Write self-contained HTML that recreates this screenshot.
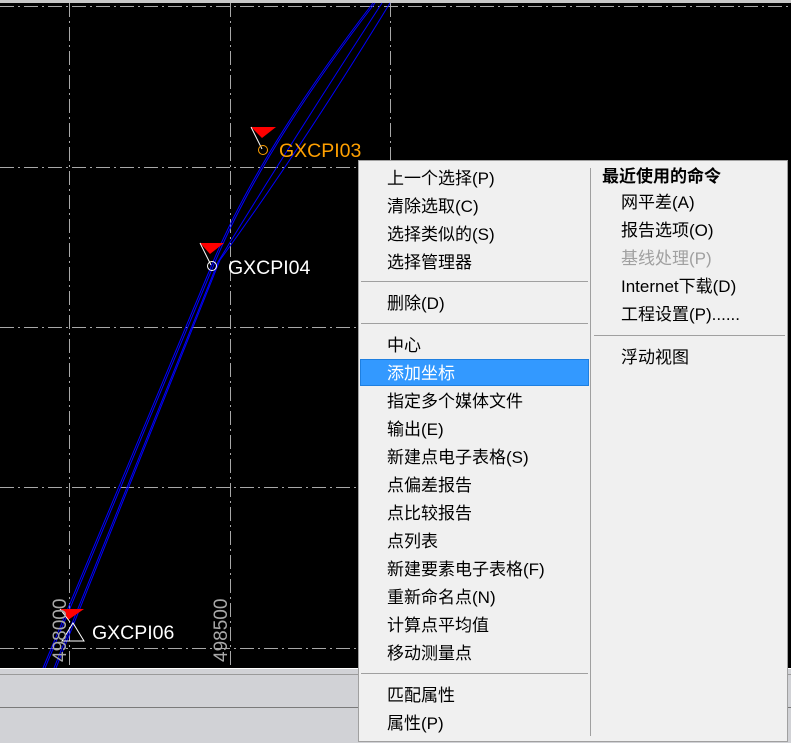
<!DOCTYPE html>
<html><head><meta charset="utf-8"><style>
*{margin:0;padding:0}
body{width:791px;height:743px;overflow:hidden;background:#000;position:relative;font-family:"Liberation Sans","Noto Sans CJK SC",sans-serif}
.abs{position:absolute}
.menu{position:absolute;left:358px;top:160px;width:430px;height:582px;background:#f0f0f0;border:1px solid #a0a0a0;box-sizing:border-box}
.it{position:absolute;font-size:17px;color:#000;line-height:20px;white-space:nowrap;margin-top:2px}
.sep{position:absolute;height:1px;background:#a0a0a0}
.lbl{position:absolute;font-size:19.5px;line-height:20px;white-space:nowrap}
</style></head><body>
<svg class="abs" style="left:0;top:0" width="791" height="743">
<rect x="0" y="0" width="791" height="3" fill="#c8c8c8"/>
<g stroke="#a8a8a8" stroke-width="1" stroke-dasharray="14,4,2,4" fill="none">
<line x1="69.5" y1="3" x2="69.5" y2="668"/>
<line x1="230.5" y1="3" x2="230.5" y2="668"/>
<line x1="390.5" y1="3" x2="390.5" y2="668"/>
<line x1="0" y1="6.5" x2="791" y2="6.5"/>
<line x1="0" y1="167.5" x2="791" y2="167.5"/>
<line x1="0" y1="327.5" x2="791" y2="327.5"/>
<line x1="0" y1="487.5" x2="791" y2="487.5"/>
<line x1="0" y1="648.5" x2="791" y2="648.5"/>
</g>
<g stroke="#0000ff" fill="none" stroke-width="1">
<path d="M43 668 L213 262 Q260 150 373 3"/>
<path d="M45 668 L215 262 Q262 150 375 3"/>
<path d="M54 668 L218 262 Q280 160 382 3"/>
<path d="M56 668 L220 260 Q300 150 390 3"/>
</g>
<polygon points="251,127 276,127 262,138" fill="#f00"/>
<line x1="251" y1="127" x2="262" y2="149" stroke="#fff"/>
<circle cx="263" cy="150" r="4.5" fill="none" stroke="#ffa000"/>
<polygon points="200,243 224,243 210,254" fill="#f00"/>
<line x1="200" y1="243" x2="211" y2="265" stroke="#fff"/>
<circle cx="212" cy="266" r="4.5" fill="none" stroke="#fff"/>
<polygon points="60,609 84,609 68,620" fill="#f00"/>
<line x1="60" y1="609" x2="70" y2="622" stroke="#fff"/>
<polygon points="62,641 84,641 73,623" fill="none" stroke="#fff"/>
<text x="0" y="0" transform="translate(66,662) rotate(-90)" font-family="Liberation Sans" font-size="19" fill="#a8a8a8">498000</text>
<text x="0" y="0" transform="translate(227,662) rotate(-90)" font-family="Liberation Sans" font-size="19" fill="#a8a8a8">498500</text>
<rect x="0" y="668" width="791" height="75" fill="#d1d2d6"/>
<rect x="0" y="668" width="791" height="1" fill="#fff"/>
<rect x="0" y="674" width="791" height="1" fill="#9a9a9a"/>
<rect x="0" y="707" width="791" height="1" fill="#7a7a7a"/>
</svg>
<div class="lbl" style="left:279px;top:141px;color:#ffa000">GXCPI03</div>
<div class="lbl" style="left:228px;top:258px;color:#fff">GXCPI04</div>
<div class="lbl" style="left:92px;top:623px;color:#fff">GXCPI06</div>
<div class="menu"></div>
<div class="abs" style="left:590px;top:168px;width:1px;height:568px;background:#a0a0a0"></div>
<div class="abs" style="left:360px;top:359px;width:229px;height:27px;background:#3399ff;border:1px solid #1e7fe0;box-sizing:border-box"></div>
<div class="sep" style="left:361px;top:281px;width:227px"></div>
<div class="sep" style="left:361px;top:323px;width:227px"></div>
<div class="sep" style="left:361px;top:673px;width:227px"></div>
<div class="sep" style="left:594px;top:335px;width:191px"></div>
<div class="it" style="left:387px;top:167px">上一个选择(P)</div>
<div class="it" style="left:387px;top:195px">清除选取(C)</div>
<div class="it" style="left:387px;top:223px">选择类似的(S)</div>
<div class="it" style="left:387px;top:251px">选择管理器</div>
<div class="it" style="left:387px;top:292px">删除(D)</div>
<div class="it" style="left:387px;top:334px">中心</div>
<div class="it" style="left:387px;top:362px;color:#fff">添加坐标</div>
<div class="it" style="left:387px;top:390px">指定多个媒体文件</div>
<div class="it" style="left:387px;top:418px">输出(E)</div>
<div class="it" style="left:387px;top:446px">新建点电子表格(S)</div>
<div class="it" style="left:387px;top:474px">点偏差报告</div>
<div class="it" style="left:387px;top:502px">点比较报告</div>
<div class="it" style="left:387px;top:530px">点列表</div>
<div class="it" style="left:387px;top:558px">新建要素电子表格(F)</div>
<div class="it" style="left:387px;top:586px">重新命名点(N)</div>
<div class="it" style="left:387px;top:614px">计算点平均值</div>
<div class="it" style="left:387px;top:642px">移动测量点</div>
<div class="it" style="left:387px;top:684px">匹配属性</div>
<div class="it" style="left:387px;top:712px">属性(P)</div>
<div class="it" style="left:602px;top:165px;font-weight:bold">最近使用的命令</div>
<div class="it" style="left:621px;top:191px">网平差(A)</div>
<div class="it" style="left:621px;top:219px">报告选项(O)</div>
<div class="it" style="left:621px;top:247px;color:#a0a0a0">基线处理(P)</div>
<div class="it" style="left:621px;top:275px">Internet下载(D)</div>
<div class="it" style="left:621px;top:303px">工程设置(P)......</div>
<div class="it" style="left:621px;top:346px">浮动视图</div>
</body></html>
